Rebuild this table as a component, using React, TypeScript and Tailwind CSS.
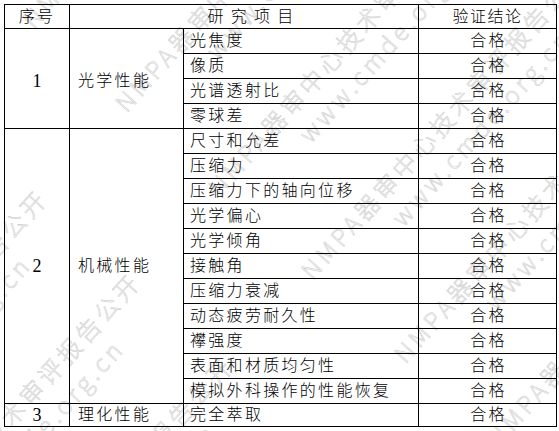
import type { ReactNode } from 'react'

const WM_TEXT = 'NMPA器审中心技术审评报告公开'
const WM_URL = 'www.cmde.org.cn'

type Group = {
  no: string
  category: string
  items: string[]
  top?: boolean
}

const groups: Group[] = [
  { no: '1', category: '光学性能', items: ['光焦度', '像质', '光谱透射比', '零球差'], top: true },
  {
    no: '2',
    category: '机械性能',
    items: [
      '尺寸和允差',
      '压缩力',
      '压缩力下的轴向位移',
      '光学偏心',
      '光学倾角',
      '接触角',
      '压缩力衰减',
      '动态疲劳耐久性',
      '襻强度',
      '表面和材质均匀性',
      '模拟外科操作的性能恢复',
    ],
  },
  { no: '3', category: '理化性能', items: ['完全萃取'] },
]

// diagonal watermark, tiled along and across the text direction
function Watermark() {
  const blocks = Array.from({ length: 7 })
  return (
    <div className="pointer-events-none absolute inset-0 overflow-hidden">
      <div className="absolute left-[-401px] top-[446px] w-[1800px] origin-top-left rotate-[-48deg] pt-[23px] font-['Noto_Sans_CJK_SC',sans-serif] text-[24px] font-light leading-6 tracking-[4px] text-[#f5f5f5] [-webkit-text-stroke:0.5px_#cdcdcd]">
        {blocks.map((_, i) => (
          <div key={i} className="flex h-[125px] flex-col gap-[8px]">
            <div className="flex pl-[70px]">
              {[0, 1, 2].map(j => (
                <span key={j} className="w-[530px] shrink-0 whitespace-nowrap">{WM_TEXT}</span>
              ))}
            </div>
            <div className="flex pl-[170px]">
              {[0, 1, 2].map(j => (
                <span key={j} className="w-[530px] shrink-0 whitespace-nowrap">{WM_URL}</span>
              ))}
            </div>
          </div>
        ))}
      </div>
    </div>
  )
}

function Cell({ children, className = '', ...rest }: { children: ReactNode; className?: string; rowSpan?: number; colSpan?: number }) {
  return (
    <td className={`border border-black p-0 align-middle ${className}`} {...rest}>
      {children}
    </td>
  )
}

export default function App() {
  return (
    <div className="relative h-[431px] w-[559px] overflow-hidden bg-white">
      <Watermark />

      <div className="relative z-10 pl-[4px] pt-[4px]">
        <table className="w-[552px] table-fixed border-collapse font-['Liberation_Serif','Noto_Sans_CJK_SC',serif] text-[16px] font-light leading-none text-black">
          <colgroup>
            <col className="w-[65px]" />
            <col className="w-[114px]" />
            <col className="w-[235px]" />
            <col className="w-[138px]" />
          </colgroup>
          <thead>
            <tr className="h-[24px]">
              <Cell className="text-center tracking-[2.3px]">序号</Cell>
              <Cell colSpan={2} className="pl-[20px] text-center tracking-[7.3px]">研究项目</Cell>
              <Cell className="text-center tracking-[1.5px]">验证结论</Cell>
            </tr>
          </thead>
          <tbody>
            {groups.map(g =>
              g.items.map((item, i) => (
                <tr key={item} className={g.no === '3' ? 'h-[23px]' : 'h-[25px]'}>
                  {i === 0 && (
                    <>
                      <Cell rowSpan={g.items.length} className={`text-center text-[18px] font-normal ${g.top ? 'pt-[4px]' : ''}`}>
                        {g.no}
                      </Cell>
                      <Cell rowSpan={g.items.length} className={`pl-[8px] tracking-[2.3px] ${g.top ? 'pt-[4px]' : ''}`}>
                        {g.category}
                      </Cell>
                    </>
                  )}
                  <Cell className="whitespace-nowrap pl-[6px] tracking-[2.3px]">{item}</Cell>
                  <Cell className="pl-[2px] text-center tracking-[2.3px]">合格</Cell>
                </tr>
              )),
            )}
          </tbody>
        </table>
      </div>
    </div>
  )
}
